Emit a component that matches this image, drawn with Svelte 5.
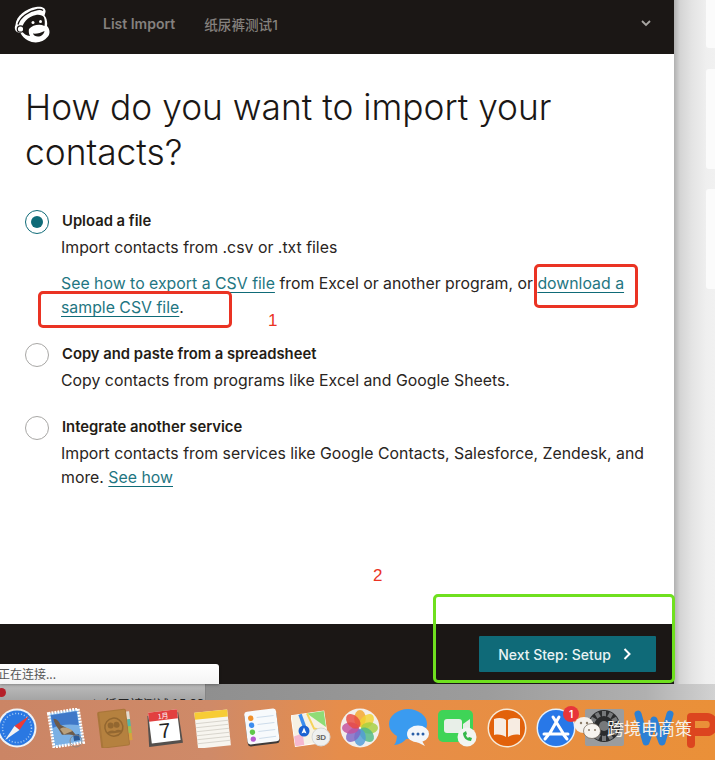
<script>
  const options = [
    { title: 'Copy and paste from a spreadsheet', text: 'Copy contacts from programs like Excel and Google Sheets.' }
  ];
  const petals = ['#f4a62a', '#f3d32f', '#a6cf3f', '#4fb985', '#4f9bd8', '#7d67c4', '#c34f9b', '#e8493f'];
  const gearTeeth = [0, 30, 60, 90, 120, 150];
</script>

<div class="screen">
  <div class="desktop">
    <div class="window">
      <header class="topbar">
        <svg class="logo" viewBox="0 0 38 38" aria-hidden="true">
          <path d="M2.500 20C3 11 13 3.500 23 2c6-1 10 1 9.500 5l-1 3.500c2.500 3 3 7 2.500 10.500 3 3 3.500 8 .5 11-4 5.500-13 7-19.500 3.500-3.500-2-6-4.500-7.500-7.500C3 28 .5 24 2.500 20z" fill="#fff"/>
          <path d="M5 19.500C7 12 16 6 24.500 4.500c2.500-.4 4.500 0 5.500 1" fill="none" stroke="#1b1715" stroke-width="1.300"/>
          <path d="M8.500 25.500C9 18 15 11.500 23 10c3.500-.6 7 .5 8 2.500 1 3 1 6 .5 8.500-5-2.500-12-1-15.500 3-.5 2-.2 5 1 7-3.500 0-6.500-2.500-8.500-5.500z" fill="#1b1715"/>
          <circle cx="7.500" cy="24" r="3.200" fill="#fff" stroke="#1b1715" stroke-width="1.200"/>
          <path d="M17 24c4-3 11-4 16-2 2.500 2.500 2.500 6.500 0 9-3 3.500-10 4.500-13.500 2-2.500-2-3.500-6-2.500-9z" fill="#fff"/>
          <path d="M20 28.500c3 .5 8-.5 11.500-2.500-.5 3.500-3.500 5.500-6.500 5.500-2.500 0-4.500-1-5-3z" fill="#1b1715"/>
          <circle cx="20" cy="17.500" r="1.500" fill="#fff"/>
          <circle cx="27.500" cy="16.500" r="1.500" fill="#fff"/>
        </svg>
        <span class="crumb first">List Import</span>
        <span class="crumb second">纸尿裤测试1</span>
        <svg class="chevron" viewBox="0 0 10 7" aria-hidden="true"><path d="M1 1l4 4 4-4" fill="none" stroke="#a9a6a3" stroke-width="1.800"/></svg>
      </header>

      <main class="content">
        <h1>How do you want to import your contacts?</h1>

        <div class="option">
          <span class="radio checked"><i></i></span>
          <div class="body">
            <h2>Upload a file</h2>
            <p>Import contacts from .csv or .txt files</p>
            <p class="help"><a href="#a">See how to export a CSV file</a> from Excel or another program, or <a href="#a">download a sample CSV file</a>.</p>
          </div>
        </div>

        {#each options as o}
          <div class="option">
            <span class="radio"></span>
            <div class="body">
              <h2>{o.title}</h2>
              <p>{o.text}</p>
            </div>
          </div>
        {/each}

        <div class="option">
          <span class="radio"></span>
          <div class="body">
            <h2>Integrate another service</h2>
            <p>Import contacts from services like Google Contacts, Salesforce, Zendesk, and more. <a href="#a">See how</a></p>
          </div>
        </div>
      </main>

      <footer class="bottombar">
        <button class="next">Next Step: Setup
          <svg viewBox="0 0 8 12" aria-hidden="true"><path d="M1.500 1l5 5-5 5" fill="none" stroke="#fff" stroke-width="2"/></svg>
        </button>
      </footer>
    </div>

    <aside class="backdrop">
      <div class="card c1"></div>
      <div class="card c2"></div>
      <div class="card c3"></div>
    </aside>
  </div>

  <div class="strip">
    <div class="strip-left"><span class="dot"></span><span class="clipped">∧ 纸尿裤测试 15:33</span></div>
    <div class="strip-right"></div>
  </div>

  <div class="dock">
    <!-- safari -->
    <svg class="app" viewBox="0 0 40 40">
      <circle cx="20" cy="20" r="19.500" fill="#eef3f8"/>
      <circle cx="20" cy="20" r="17.500" fill="#2a78e2"/>
      <circle cx="20" cy="20" r="14.500" fill="none" stroke="#a9cdf5" stroke-width="1.500" stroke-dasharray="1 2"/>
      <path d="M32 8L17.500 18l5 4z" fill="#ee3a34"/>
      <path d="M8 32l9.500-14 5 4z" fill="#f3f3f3"/>
    </svg>
    <!-- mail -->
    <svg class="app" viewBox="0 0 40 40">
      <g transform="rotate(-9 20 20)">
        <rect x="5" y="3" width="30" height="34" fill="#7ab0e4" stroke="#fff" stroke-width="3" stroke-dasharray="2 1"/>
        <path d="M7 5h26v14c-8-2-18-4-26-1z" fill="#3f78c8"/>
        <path d="M9 9c3 0 5 3 6 7l11 8 3 5-7-2-7-1-3-7c-2-3-3-7-3-10z" fill="#6d5a48"/>
        <path d="M14 20c4-2 9 0 12 4l-9 2z" fill="#b9a07c"/>
        <rect x="26" y="28" width="6" height="6" fill="#2c5a96"/>
      </g>
      <circle cx="30" cy="33" r="6" fill="none" stroke="#8a8078" stroke-width=".8"/>
    </svg>
    <!-- contacts -->
    <svg class="app" viewBox="0 0 40 40">
      <g transform="rotate(-7 20 20)">
        <rect x="4" y="2" width="29" height="37" rx="2" fill="#a9763a"/>
        <rect x="6" y="3" width="26" height="35" rx="1" fill="#b5813f"/>
        <rect x="33" y="5" width="3" height="8" fill="#e3ddd0"/>
        <rect x="33" y="13" width="3" height="7" fill="#52b7a8"/>
        <rect x="33" y="20" width="3" height="7" fill="#9fbd4d"/>
        <rect x="33" y="27" width="3" height="7" fill="#d8a23e"/>
        <circle cx="19" cy="19" r="9" fill="none" stroke="#936730" stroke-width="1.500"/>
        <circle cx="16" cy="17" r="3" fill="#936730"/>
        <circle cx="22" cy="17" r="3" fill="#936730"/>
        <path d="M11 25c1-4 9-4 10 0zM18 25c1-4 8-4 9 0z" fill="#936730"/>
      </g>
    </svg>
    <!-- calendar -->
    <svg class="app" viewBox="0 0 40 40">
      <g transform="rotate(-7 20 20)">
        <path d="M5 6h31l1 31H3z" fill="#55504d"/>
        <rect x="6" y="3" width="29" height="31" fill="#fff"/>
        <rect x="6" y="3" width="29" height="9" fill="#e2403f"/>
        <text x="20.500" y="10.500" class="cal-month">1月</text>
        <text x="20.500" y="30" class="cal-day">7</text>
      </g>
    </svg>
    <!-- notes -->
    <svg class="app" viewBox="0 0 40 40">
      <g transform="rotate(-6 20 20)">
        <rect x="3" y="3" width="33" height="36" fill="#f7f5ef"/>
        <rect x="3" y="3" width="33" height="7" fill="#f7cc35"/>
        <path d="M3 14h33M3 18h33M3 22h33M3 26h33M3 30h33M3 34h33" stroke="#d8d5cd"/>
      </g>
    </svg>
    <!-- reminders -->
    <svg class="app" viewBox="0 0 40 40">
      <g transform="rotate(-7 20 20)">
        <rect x="4" y="4" width="32" height="33" rx="3" fill="#3e3a38"/>
        <rect x="4" y="2" width="32" height="33" rx="3" fill="#f7fafc"/>
        <circle cx="10" cy="9" r="2.700" fill="#f0902b"/>
        <circle cx="10" cy="16" r="2.700" fill="#3c8dee"/>
        <circle cx="10" cy="23" r="2.700" fill="#5fc94a"/>
        <circle cx="10" cy="30" r="2.700" fill="#b65bd0"/>
        <path d="M16 9h17M16 16h17M16 23h17M16 30h17" stroke="#cddcea"/>
      </g>
    </svg>
    <!-- maps -->
    <svg class="app" viewBox="0 0 40 40">
      <g transform="rotate(-8 20 20)">
        <rect x="2" y="5" width="33" height="31" fill="#f6f1e4" stroke="#fff"/>
        <path d="M18 5h17v16z" fill="#8fdc76"/>
        <path d="M2 26l9-2v12H2z" fill="#f5b8cf"/>
        <path d="M11 5l4 19" stroke="#3c8dee" stroke-width="3.500"/>
        <path d="M18 5l5 16 12 4" stroke="#f5d35a" stroke-width="2" fill="none"/>
      </g>
      <circle cx="13" cy="23" r="5.500" fill="#1a62d2"/>
      <path d="M13 19.500l2.500 6-2.500-1-2.500 1z" fill="#fff"/>
      <circle cx="30" cy="29" r="9" fill="#eef0f0" stroke="#d4d6d6"/>
      <text x="30" y="32" class="map-3d">3D</text>
    </svg>
    <!-- photos -->
    <svg class="app" viewBox="0 0 40 40">
      <circle cx="20" cy="20" r="19.500" fill="#f2efec"/>
      {#each petals as c, i}
        <ellipse cx="20" cy="10.500" rx="5.800" ry="8.500" fill={c} opacity=".82" transform="rotate({i * 45} 20 20)"/>
      {/each}
    </svg>
    <!-- messages -->
    <svg class="app" viewBox="0 0 40 40">
      <ellipse cx="19" cy="16" rx="19" ry="15" fill="#3a9bf0"/>
      <path d="M8 26c0 5-1 9-3 11 5 0 10-3 13-7z" fill="#3a9bf0"/>
      <ellipse cx="29" cy="26" rx="11" ry="8.500" fill="#f3f6fa"/>
      <path d="M33 33l3 5-8-4z" fill="#f3f6fa"/>
      <circle cx="24" cy="26" r="1.500" fill="#2b5fa8"/>
      <circle cx="29" cy="26" r="1.500" fill="#2b5fa8"/>
      <circle cx="34" cy="26" r="1.500" fill="#2b5fa8"/>
    </svg>
    <!-- facetime -->
    <svg class="app" viewBox="0 0 40 40">
      <rect x="0" y="2" width="35" height="32" rx="5" fill="#3fd457"/>
      <rect x="6" y="11" width="18" height="14" rx="3" fill="#e8efe8"/>
      <path d="M25 16l7-5v14l-7-4z" fill="#e8efe8"/>
      <circle cx="29" cy="29" r="9.500" fill="#f2f5f2"/>
      <path d="M25 25c0 5 4 8 8 8l1-3-3-1-1 1c-1-1-2-2-2-3l1-1-1-3z" fill="#35b84b"/>
    </svg>
    <!-- books -->
    <svg class="app" viewBox="0 0 40 40">
      <circle cx="20" cy="20" r="19.500" fill="#f6ead9"/>
      <circle cx="20" cy="20" r="18" fill="#e2620b"/>
      <path d="M7 11c5-2 10-1 12 1v17c-3-2-7-3-12-2zM33 11c-5-2-10-1-12 1v17c3-2 7-3 12-2z" fill="#f7ece2"/>
    </svg>
    <!-- app store -->
    <div class="appstore">
      <svg class="app" viewBox="0 0 40 40">
        <circle cx="20" cy="20" r="19.500" fill="#e4f0fb"/>
        <circle cx="20" cy="20" r="18" fill="#2878e8"/>
        <path d="M23 9L14 25M17 9l10 16M8 26h24M27 26l4 5M13 26l-4 5" stroke="#fff" stroke-width="3" fill="none" stroke-linecap="round"/>
      </svg>
      <span class="badge">1</span>
    </div>
    <!-- system preferences -->
    <svg class="app" viewBox="0 0 40 40">
      <rect x="0" y="1" width="39" height="37" rx="2" fill="#9a9c9e"/>
      <circle cx="19" cy="18" r="16" fill="#2b2c2d"/>
      {#each gearTeeth as a}
        <rect x="17" y="3" width="4" height="30" fill="#77797b" transform="rotate({a} 19 18)"/>
      {/each}
      <circle cx="19" cy="18" r="10" fill="#2b2c2d"/>
      <circle cx="19" cy="18" r="5" fill="#77797b"/>
    </svg>
    <!-- word -->
    <svg class="app" viewBox="0 0 40 40">
      <path d="M4 6l8 28 8-22 8 22 8-28" fill="none" stroke="#2d80d4" stroke-width="7" stroke-linejoin="round" stroke-linecap="round"/>
    </svg>
    <!-- powerpoint -->
    <svg class="app" viewBox="0 0 40 40">
      <path d="M8 36V9h16c9 0 9 15 0 15H10" fill="none" stroke="#dc451f" stroke-width="8" stroke-linejoin="round" stroke-linecap="round"/>
    </svg>
  </div>

  <!-- screenshot annotations -->
  <div class="mark red m1"></div>
  <div class="mark red m2"></div>
  <div class="mark green m3"></div>
  <span class="num n1">1</span>
  <span class="num n2">2</span>

  <div class="status">正在连接...</div>

  <div class="watermark">
    <svg viewBox="0 0 27 22" aria-hidden="true">
      <ellipse cx="10" cy="8" rx="9.500" ry="8" fill="#f4f1ec"/>
      <ellipse cx="18" cy="14" rx="8.500" ry="7.500" fill="#f7f4ef" stroke="#6c6054" stroke-width=".7"/>
      <circle cx="7" cy="6" r="1.200" fill="#8a7a66"/>
      <circle cx="13" cy="6" r="1.200" fill="#8a7a66"/>
      <circle cx="15" cy="13" r="1" fill="#8a7a66"/>
      <circle cx="21" cy="13" r="1" fill="#8a7a66"/>
    </svg>
    <span>跨境电商策</span>
  </div>
</div>

<style>
  :global(body) {
    margin: 0;
    background: #fff;
  }

  .screen {
    position: relative;
    width: 715px;
    height: 760px;
    overflow: hidden;
    font-family: Inter, "Noto Sans CJK SC", sans-serif;
    color: #241c15;
  }

  .desktop {
    display: flex;
    height: 684px;
  }

  .window {
    width: 674px;
    display: flex;
    flex-direction: column;
    flex-shrink: 0;
    background: #fff;
  }

  .topbar {
    height: 54px;
    background: #1b1715;
    display: flex;
    align-items: center;
    padding: 0 23px 7px 13px;
    box-sizing: border-box;
  }

  .logo {
    width: 38px;
    height: 38px;
    margin-right: 52px;
  }

  .crumb {
    color: #85817e;
    font-size: 14px;
    font-weight: 600;
  }

  .crumb.first {
    margin-right: 29px;
  }

  .crumb.second {
    font-size: 13.6px;
    font-weight: 500;
  }

  .chevron {
    width: 10px;
    height: 7px;
    margin-left: auto;
  }

  .content {
    flex: 1;
    padding: 31px 26px 0 25px;
    font-size: 16px;
    line-height: 24px;
  }

  h1 {
    margin: 0 0 35px;
    font-size: 35.3px;
    font-weight: 300;
    line-height: 45px;
    color: #1b1715;
  }

  .option {
    display: flex;
    gap: 12px;
    margin-bottom: 23px;
  }

  .radio {
    width: 22px;
    height: 22px;
    flex-shrink: 0;
    border: 1px solid #a8a7a5;
    border-radius: 50%;
    display: flex;
    align-items: center;
    justify-content: center;
  }

  .radio.checked {
    border-color: #0f6b78;
  }

  .radio i {
    width: 12px;
    height: 12px;
    border-radius: 50%;
    background: #0f6b78;
  }

  .body {
    flex: 1;
  }

  h2 {
    margin: 0;
    padding-left: 1px;
    font-size: 14.8px;
    font-weight: 600;
    line-height: 22px;
  }

  p {
    margin: 4px 0 0;
    font-size: 15.85px;
    line-height: 24px;
    color: #2a2522;
  }

  .help {
    margin-top: 12px;
  }

  a {
    color: #1f7682;
    text-decoration: underline;
    text-decoration-color: #0f6b78;
    text-underline-offset: 3px;
    text-decoration-thickness: 1px;
  }

  .bottombar {
    height: 60px;
    background: #1b1715;
    display: flex;
    justify-content: flex-end;
    align-items: center;
    padding-right: 18px;
  }

  .next {
    width: 177px;
    height: 36px;
    border: 0;
    border-radius: 1px;
    background: #0f6a78;
    color: #e9f3f4;
    font: 500 14px Inter, sans-serif;
    display: flex;
    align-items: center;
    justify-content: center;
    gap: 12px;
    padding: 0 6px 0 0;
  }

  .next svg {
    width: 8px;
    height: 12px;
  }

  .backdrop {
    flex: 1;
    position: relative;
    background: linear-gradient(90deg, #b0b0b0 0, #d4d4d4 6px, #e4e4e4 18px, #efefef 32px, #f1f1f1 100%);
  }

  .card {
    position: absolute;
    left: 32px;
    right: 0;
    background: #fbfbfb;
    border-radius: 3px 0 0 3px;
  }

  .c1 { top: -4px; height: 52px; }
  .c2 { top: 69px; height: 100px; }
  .c3 { top: 189px; height: 100px; }

  .strip {
    height: 16px;
    display: flex;
  }

  .strip-left {
    width: 205px;
    position: relative;
    overflow: hidden;
    background: linear-gradient(#bcbcbc, #a4a4a4);
  }

  .strip-right {
    flex: 1;
    border-left: 1px solid #858585;
    background: linear-gradient(90deg, #8f8f8f 0, #9c9c9c 280px, #b0b0b0 440px, #d2d2d2 100%);
  }

  .dot {
    position: absolute;
    left: -3px;
    top: 4px;
    width: 9px;
    height: 9px;
    border-radius: 50%;
    background: #b5202a;
  }

  .clipped {
    position: absolute;
    left: 88px;
    top: 12px;
    font: 13px "Noto Sans CJK SC", sans-serif;
    line-height: 16px;
    color: #222;
    white-space: nowrap;
  }

  .dock {
    height: 60px;
    background: linear-gradient(90deg, #cb8565 0, #cf8a68 210px, #e68d4b 340px, #ea9038 715px);
    display: flex;
    align-items: flex-start;
    gap: 9px;
    padding-top: 8px;
    box-sizing: border-box;
  }

  .dock > :first-child {
    margin-left: -3px;
  }

  .app {
    width: 40px;
    height: 40px;
    flex-shrink: 0;
  }

  .appstore {
    position: relative;
    height: 40px;
  }

  .badge {
    position: absolute;
    top: -2px;
    right: -3px;
    width: 16px;
    height: 16px;
    border-radius: 50%;
    background: #e8353a;
    color: #fff;
    font-size: 10px;
    font-weight: 600;
    line-height: 16px;
    text-align: center;
  }

  .cal-month {
    font: 7px "Noto Sans CJK SC", sans-serif;
    fill: #fff;
    text-anchor: middle;
  }

  .cal-day {
    font: 21px "Liberation Sans", sans-serif;
    fill: #222;
    text-anchor: middle;
  }

  .map-3d {
    font: 700 8px "Liberation Sans", sans-serif;
    fill: #666;
    text-anchor: middle;
  }

  .mark {
    position: absolute;
    border-radius: 5px;
    box-sizing: border-box;
  }

  .red {
    border: 3px solid #ea3323;
  }

  .m1 { left: 534px; top: 264px; width: 104px; height: 44px; }
  .m2 { left: 38px; top: 291px; width: 194px; height: 37px; }

  .green {
    left: 433px;
    top: 594px;
    width: 242px;
    height: 89px;
    border: 3px solid #6fe01f;
  }

  .num {
    position: absolute;
    color: #ea3323;
    font: 17px "Liberation Sans", sans-serif;
  }

  .n1 { left: 268px; top: 311px; }
  .n2 { left: 373px; top: 566px; }

  .status {
    position: absolute;
    left: 0;
    top: 664px;
    width: 219px;
    height: 20px;
    background: linear-gradient(#fff, #f4f4f4);
    border-radius: 0 3px 0 0;
    box-shadow: 0 1px 3px rgba(0, 0, 0, 0.3);
    font: 12px/20px "Noto Sans CJK SC", sans-serif;
    text-indent: -2px;
    color: #555;
  }

  .watermark {
    position: absolute;
    left: 574px;
    top: 716px;
    display: flex;
    align-items: center;
    gap: 6px;
    color: #f5f1ea;
    font: 17px/24px "Noto Sans CJK SC", sans-serif;
  }

  .watermark svg {
    width: 27px;
    height: 22px;
  }
</style>
